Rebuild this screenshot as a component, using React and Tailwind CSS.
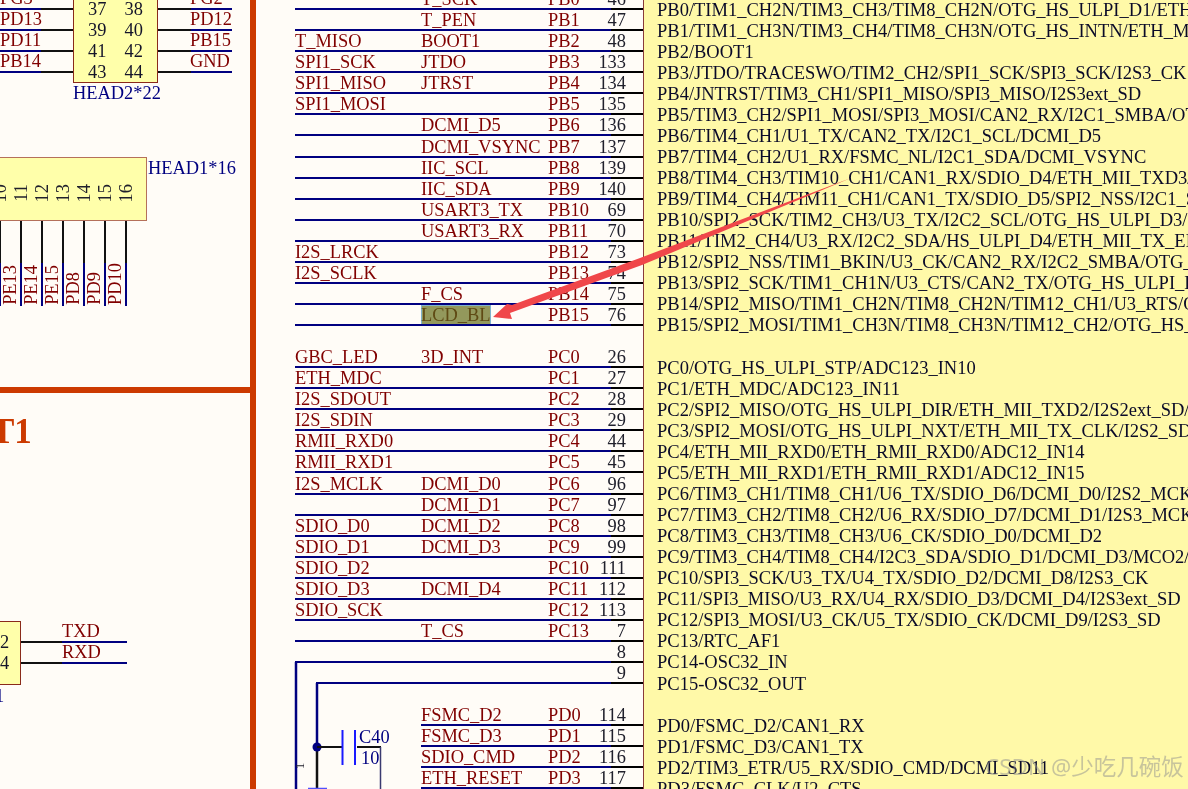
const NAVY = "#000080";

const netRows = [
  { b: "T_SCK", p: "PB0", n: "46" },
  { b: "T_PEN", p: "PB1", n: "47" },
  { a: "T_MISO", b: "BOOT1", p: "PB2", n: "48" },
  { a: "SPI1_SCK", b: "JTDO", p: "PB3", n: "133" },
  { a: "SPI1_MISO", b: "JTRST", p: "PB4", n: "134" },
  { a: "SPI1_MOSI", p: "PB5", n: "135" },
  { b: "DCMI_D5", p: "PB6", n: "136" },
  { b: "DCMI_VSYNC", p: "PB7", n: "137" },
  { b: "IIC_SCL", p: "PB8", n: "139" },
  { b: "IIC_SDA", p: "PB9", n: "140" },
  { b: "USART3_TX", p: "PB10", n: "69" },
  { b: "USART3_RX", p: "PB11", n: "70" },
  { a: "I2S_LRCK", p: "PB12", n: "73" },
  { a: "I2S_SCLK", p: "PB13", n: "74" },
  { b: "F_CS", p: "PB14", n: "75" },
  { b: "LCD_BL", p: "PB15", n: "76", hl: true },
  { blank: true },
  { a: "GBC_LED", b: "3D_INT", p: "PC0", n: "26" },
  { a: "ETH_MDC", p: "PC1", n: "27" },
  { a: "I2S_SDOUT", p: "PC2", n: "28" },
  { a: "I2S_SDIN", p: "PC3", n: "29" },
  { a: "RMII_RXD0", p: "PC4", n: "44" },
  { a: "RMII_RXD1", p: "PC5", n: "45" },
  { a: "I2S_MCLK", b: "DCMI_D0", p: "PC6", n: "96" },
  { b: "DCMI_D1", p: "PC7", n: "97" },
  { a: "SDIO_D0", b: "DCMI_D2", p: "PC8", n: "98" },
  { a: "SDIO_D1", b: "DCMI_D3", p: "PC9", n: "99" },
  { a: "SDIO_D2", p: "PC10", n: "111" },
  { a: "SDIO_D3", b: "DCMI_D4", p: "PC11", n: "112" },
  { a: "SDIO_SCK", p: "PC12", n: "113" },
  { b: "T_CS", p: "PC13", n: "7" },
  { n: "8", bare: true },
  { n: "9", bare: true, inset: true },
  { blank: true },
  { b: "FSMC_D2", p: "PD0", n: "114", short: true },
  { b: "FSMC_D3", p: "PD1", n: "115", short: true },
  { b: "SDIO_CMD", p: "PD2", n: "116", short: true },
  { b: "ETH_RESET", p: "PD3", n: "117", short: true },
];

const chipLines = [
  "PB0/TIM1_CH2N/TIM3_CH3/TIM8_CH2N/OTG_HS_ULPI_D1/ETH_MII_RXD2",
  "PB1/TIM1_CH3N/TIM3_CH4/TIM8_CH3N/OTG_HS_INTN/ETH_MII_RXD3",
  "PB2/BOOT1",
  "PB3/JTDO/TRACESWO/TIM2_CH2/SPI1_SCK/SPI3_SCK/I2S3_CK",
  "PB4/JNTRST/TIM3_CH1/SPI1_MISO/SPI3_MISO/I2S3ext_SD",
  "PB5/TIM3_CH2/SPI1_MOSI/SPI3_MOSI/CAN2_RX/I2C1_SMBA/OTG_HS_ULPI_D7",
  "PB6/TIM4_CH1/U1_TX/CAN2_TX/I2C1_SCL/DCMI_D5",
  "PB7/TIM4_CH2/U1_RX/FSMC_NL/I2C1_SDA/DCMI_VSYNC",
  "PB8/TIM4_CH3/TIM10_CH1/CAN1_RX/SDIO_D4/ETH_MII_TXD3/I2C1_SCL",
  "PB9/TIM4_CH4/TIM11_CH1/CAN1_TX/SDIO_D5/SPI2_NSS/I2C1_SDA",
  "PB10/SPI2_SCK/TIM2_CH3/U3_TX/I2C2_SCL/OTG_HS_ULPI_D3/ETH_MII_RX_ER",
  "PB11/TIM2_CH4/U3_RX/I2C2_SDA/HS_ULPI_D4/ETH_MII_TX_EN",
  "PB12/SPI2_NSS/TIM1_BKIN/U3_CK/CAN2_RX/I2C2_SMBA/OTG_HS_ULPI_D5",
  "PB13/SPI2_SCK/TIM1_CH1N/U3_CTS/CAN2_TX/OTG_HS_ULPI_D6",
  "PB14/SPI2_MISO/TIM1_CH2N/TIM8_CH2N/TIM12_CH1/U3_RTS/OTG_HS_DM",
  "PB15/SPI2_MOSI/TIM1_CH3N/TIM8_CH3N/TIM12_CH2/OTG_HS_DP",
  "",
  "PC0/OTG_HS_ULPI_STP/ADC123_IN10",
  "PC1/ETH_MDC/ADC123_IN11",
  "PC2/SPI2_MISO/OTG_HS_ULPI_DIR/ETH_MII_TXD2/I2S2ext_SD/ADC123",
  "PC3/SPI2_MOSI/OTG_HS_ULPI_NXT/ETH_MII_TX_CLK/I2S2_SD/ADC123",
  "PC4/ETH_MII_RXD0/ETH_RMII_RXD0/ADC12_IN14",
  "PC5/ETH_MII_RXD1/ETH_RMII_RXD1/ADC12_IN15",
  "PC6/TIM3_CH1/TIM8_CH1/U6_TX/SDIO_D6/DCMI_D0/I2S2_MCK",
  "PC7/TIM3_CH2/TIM8_CH2/U6_RX/SDIO_D7/DCMI_D1/I2S3_MCK",
  "PC8/TIM3_CH3/TIM8_CH3/U6_CK/SDIO_D0/DCMI_D2",
  "PC9/TIM3_CH4/TIM8_CH4/I2C3_SDA/SDIO_D1/DCMI_D3/MCO2/I2S_CKIN",
  "PC10/SPI3_SCK/U3_TX/U4_TX/SDIO_D2/DCMI_D8/I2S3_CK",
  "PC11/SPI3_MISO/U3_RX/U4_RX/SDIO_D3/DCMI_D4/I2S3ext_SD",
  "PC12/SPI3_MOSI/U3_CK/U5_TX/SDIO_CK/DCMI_D9/I2S3_SD",
  "PC13/RTC_AF1",
  "PC14-OSC32_IN",
  "PC15-OSC32_OUT",
  "",
  "PD0/FSMC_D2/CAN1_RX",
  "PD1/FSMC_D3/CAN1_TX",
  "PD2/TIM3_ETR/U5_RX/SDIO_CMD/DCMI_SD11",
  "PD3/FSMC_CLK/U2_CTS",
];

function NetRow({ r }) {
  if (r.blank) return <div className="h-[21.07px]" />;
  return (
    <div
      className={
        "relative flex h-[21.07px] items-end border-b-2 border-[#000080] pr-[17px] leading-[18px] text-[#800000] " +
        (r.short ? "ml-[126px]" : r.inset ? "ml-[21px]" : "")
      }
    >
      {!r.short && !r.bare && <span className="w-[126px] shrink-0">{r.a}</span>}
      {r.bare ? (
        <span className="flex-1" />
      ) : r.hl ? (
        <span className="w-[127px] shrink-0">
          <span className="block h-[19px] w-[70px] border border-b-0 border-[#7fb2cc] bg-[#93985c] leading-[18px] text-[#5f4a14]">
            <span className="-ml-px">{r.b}</span>
          </span>
        </span>
      ) : (
        <span className="w-[127px] shrink-0">{r.b}</span>
      )}
      {r.p && <span className="flex-1">{r.p}</span>}
      <span className="text-[#20202c]">{r.n}</span>
      <span className="absolute right-0 bottom-[-2px] h-[2px] w-[32px] bg-black" />
    </div>
  );
}

/* a net label sitting on its wire; the black pin stub is overlaid on the wire */
function Wire({ label, className, stub }) {
  return (
    <div className={"relative flex h-[21.07px] items-end border-b-2 border-[#000080] leading-[19px] text-[#800000] " + className}>
      {label}
      <span className={"absolute bottom-[-2px] h-[2px] bg-[#111] " + stub} />
    </div>
  );
}

function VPin({ label, first }) {
  return (
    <div className={"flex h-[85px] w-[21px] shrink-0 " + (first ? "-ml-[20px]" : "")}>
      <div className="flex w-[19px] shrink-0 items-end justify-center pb-[1px] pr-[1px] text-[#800000]">
        <span className="rotate-180 whitespace-nowrap leading-[18px] [writing-mode:vertical-rl]">{label}</span>
      </div>
      <div className="flex w-[2px] shrink-0 flex-col">
        <div className="h-[42px] bg-[#111]" />
        <div className="h-[43px] bg-[#000080]" />
      </div>
    </div>
  );
}

function LeftCanvas() {
  const topNums = [["37", "38"], ["39", "40"], ["41", "42"], ["43", "44"]];
  const leftNets = ["PG3", "PD13", "PD11", "PB14"];
  const rightNets = ["PG2", "PD12", "PB15", "GND"];
  const vNums = ["10", "11", "12", "13", "14", "15", "16"];
  const vNets = ["", "PE13", "PE14", "PE15", "PD8", "PD9", "PD10"];
  return (
    <div className="flex w-[250px] shrink-0 flex-col">
      {/* HEAD2*22 connector */}
      <div className="-mt-[11px] flex h-[94px]">
        <div className="w-[73px] shrink-0">
          {leftNets.map((t) => (
            <Wire key={t} label={t} className="" stub="right-0 w-[32px]" />
          ))}
        </div>
        <div className="w-[85px] shrink-0 border border-[#8a2a1a] bg-[#ffffaa] pt-[8.5px] text-[#14142a]">
          {topNums.map((pair) => (
            <div key={pair[0]} className="flex h-[21.07px] justify-between px-[14px] leading-[21px]">
              <span>{pair[0]}</span>
              <span>{pair[1]}</span>
            </div>
          ))}
        </div>
        <div className="w-[74px] shrink-0">
          {rightNets.map((t) => (
            <Wire key={t} label={t} className="pl-[32px]" stub="left-0 w-[33px]" />
          ))}
        </div>
      </div>
      <div className="h-[22px] pl-[73px] leading-[20px] text-[#000080]">HEAD2*22</div>

      {/* HEAD1*16 connector */}
      <div className="mt-[52px] flex h-[64px]">
        <div className="-ml-px flex w-[148px] shrink-0 items-end border border-[#b5705a] bg-[#ffffaa] pb-[18px] text-[#20202c]">
          {vNums.map((t, i) => (
            <div key={t} className={"flex w-[21px] shrink-0 justify-center " + (i === 0 ? "-ml-[11px]" : "")}>
              <span className="rotate-180 leading-[18px] [writing-mode:vertical-rl]">{t}</span>
            </div>
          ))}
        </div>
        <span className="pl-px pt-px leading-[20px] text-[#000080]">HEAD1*16</span>
      </div>
      <div className="flex">
        {vNets.map((t, i) => (
          <VPin key={i} label={t} first={i === 0} />
        ))}
      </div>

      {/* sheet frame */}
      <div className="mt-[81px] h-[6px] shrink-0 bg-[#cc3a00]" />
      <div className="mt-[18px] -ml-[9px] h-[41px] text-[35px] font-bold leading-[42px] text-[#cc3a00]">T1</div>

      {/* bottom connector */}
      <div className="mt-[169px] flex h-[64px]">
        <div className="-ml-px w-[22px] shrink-0 border border-[#8a2a1a] bg-[#ffffaa] pt-[10px] text-right text-[#14142a]">
          <div className="h-[21.07px] pr-[15px] leading-[20px]">2</div>
          <div className="h-[21.07px] pr-[15px] leading-[20px]">4</div>
        </div>
        <div className="w-[106px] shrink-0 pt-px">
          <Wire label="TXD" className="pl-[41px]" stub="left-0 w-[41px]" />
          <Wire label="RXD" className="pl-[41px]" stub="left-0 w-[41px]" />
        </div>
      </div>
      <div className="-ml-[5px] pt-px leading-[20px] text-[#000080]">1</div>
    </div>
  );
}

export default function App() {
  return (
    <div className="relative flex h-[789px] w-[1188px] overflow-hidden bg-[#fffcf7] font-['Liberation_Serif',serif] text-[18.4px] blur-[0.3px]">
      <LeftCanvas />
      <div className="w-[6px] shrink-0 bg-[#cc3a00]" />

      <div className="relative w-[387px] shrink-0 pl-[39px]">
        <div className="-mt-[11px] w-[348px]">
          {netRows.map((r, i) => (
            <NetRow key={i} r={r} />
          ))}
        </div>
        {/* decoupling network: a drawing that lies over the nets */}
        <svg className="absolute left-0 top-0" width="387" height="789" fill="none">
          <path d="M40 662V789" stroke={NAVY} strokeWidth="2.5" />
          <path d="M61 683V747" stroke={NAVY} strokeWidth="2.5" />
          <path d="M61 747V789" stroke="#111" strokeWidth="2.5" />
          <circle cx="61" cy="747" r="4.5" fill={NAVY} />
          <path d="M61 747H86M101 747H125" stroke="#111" strokeWidth="2" />
          <path d="M86.5 730V765M99 730V765" stroke="#1a1aff" strokeWidth="2" />
          <path d="M124.5 747V789" stroke="#3a3a70" strokeWidth="1.5" />
          <path d="M52 788.5H71" stroke="#5050ff" strokeWidth="1.5" />
        </svg>
        <span className="absolute left-[103px] top-[727px] leading-[20px] text-[#000080]">C40</span>
        <span className="absolute left-[105px] top-[748px] leading-[20px] text-[#000080]">10</span>
        <span className="absolute left-[41px] top-[758px] -rotate-90 text-[13px] leading-[16px] text-[#20202c]">1</span>
      </div>

      <div className="min-w-0 flex-1 overflow-hidden border-l border-[#8a3a3a] bg-[#fff9a8] pl-[13px] text-[18.5px] text-[#0a0a28]">
        <div className="-mt-[0.5px] whitespace-nowrap">
          {chipLines.map((t, i) => (
            <div key={i} className="h-[21.07px] leading-[21px]">
              {t}
            </div>
          ))}
        </div>
      </div>

      {/* annotation arrow drawn over the schematic */}
      <svg className="absolute inset-0" width="1188" height="789" fill="#f0474a">
        <path d="M851 178L640 258L512 305L507 304L493 317L512 319L510 313L642 265Z" />
      </svg>
      <span className="absolute left-[985px] top-[752px] font-['Noto_Sans','Noto_Sans_CJK_SC',sans-serif] text-[22.5px] leading-[30px] text-[#8f8f8f]/50">
        CSDN @少吃几碗饭
      </span>
    </div>
  );
}
